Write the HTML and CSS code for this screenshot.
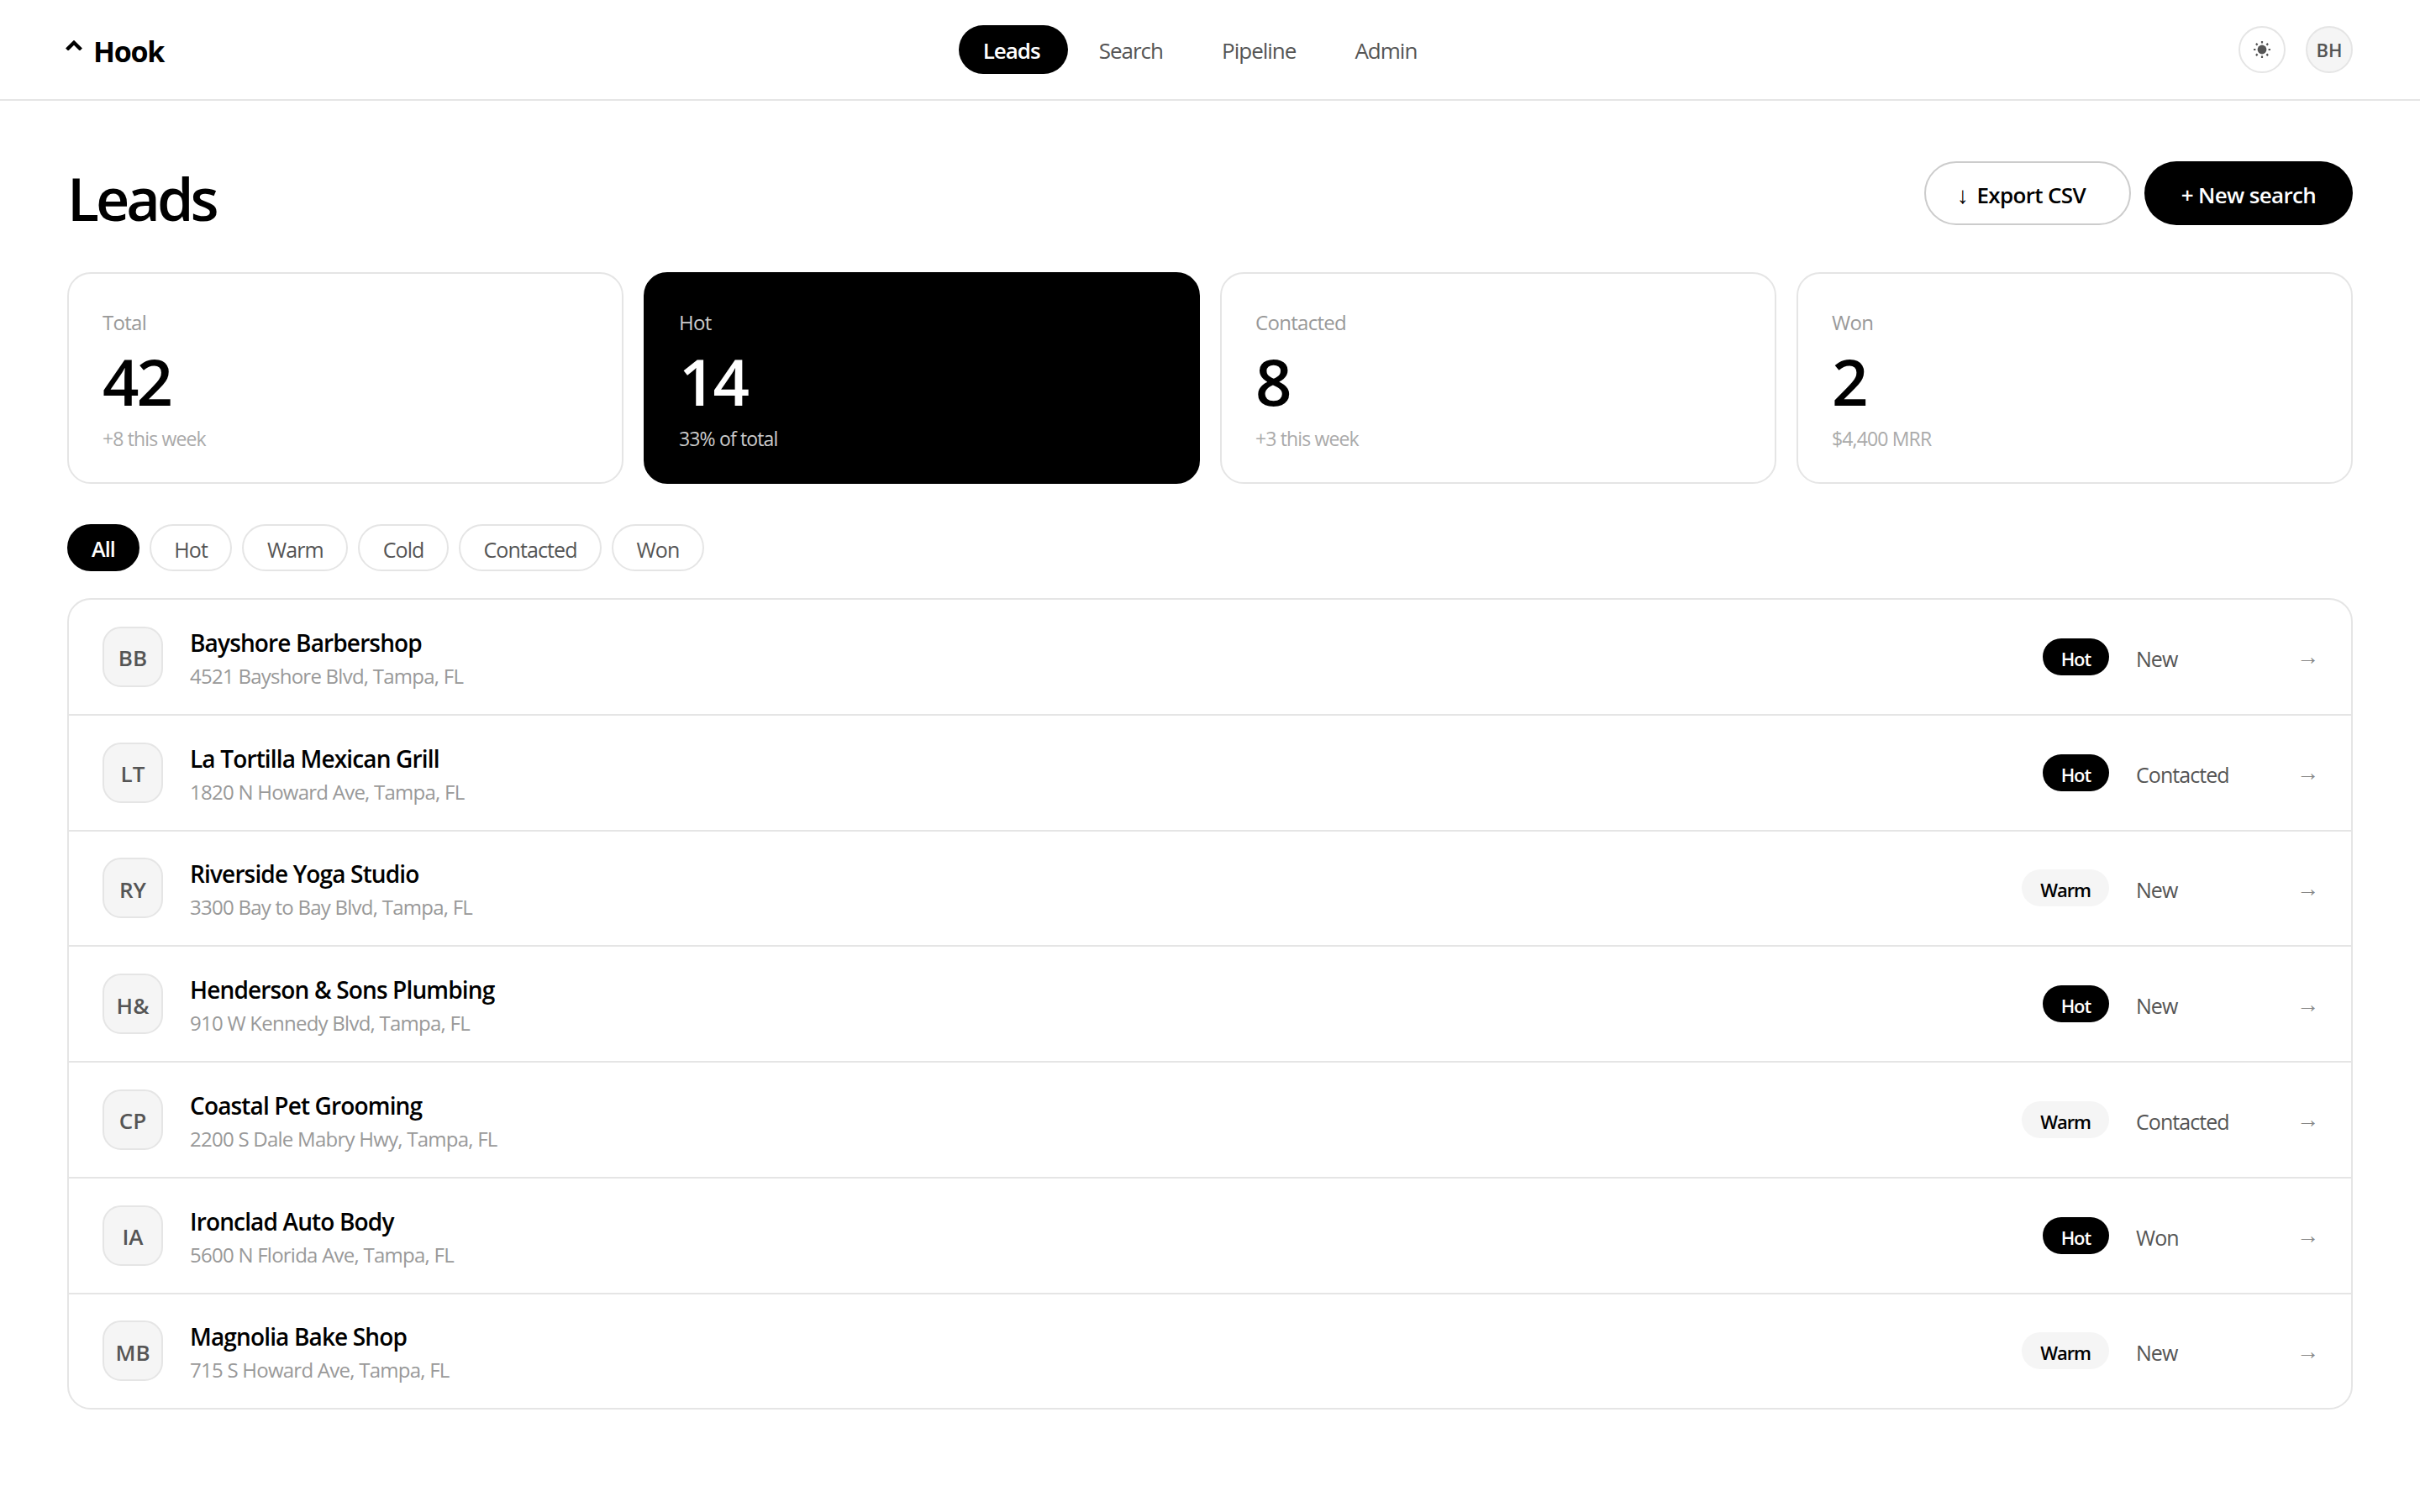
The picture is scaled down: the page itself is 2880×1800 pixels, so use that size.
FILE: index.html
```html
<!DOCTYPE html>
<html>

<head>
    <title>Leads | Hook</title>
    <meta charset="utf-8">
    <link rel="stylesheet" href="styles.css">
</head>

<body>
    <header class="topbar">
        <a class="logo">
            <svg class="caret" viewBox="0 0 20 12" width="20" height="12">
                <path d="M1.6 11 10 2.8 18.4 11" fill="none" stroke="#000" stroke-width="4.4"/>
            </svg>
            <span>Hook</span>
        </a>
        <nav class="nav">
            <a class="nav-item active">Leads</a>
            <a class="nav-item">Search</a>
            <a class="nav-item">Pipeline</a>
            <a class="nav-item">Admin</a>
        </nav>
        <div class="top-actions">
            <button class="round-btn" type="button">
                <svg class="sun" viewBox="0 0 24 24" width="24" height="24">
                    <circle cx="12" cy="12" r="5.4" fill="#555"/>
                    <path d="M12 2v2.4M12 19.6V22M2 12h2.4M19.6 12H22M4.9 4.9l1.7 1.7M17.4 17.4l1.7 1.7M4.9 19.1l1.7-1.7M17.4 6.6l1.7-1.7" stroke="#555" stroke-width="2.2" fill="none"/>
                </svg>
            </button>
            <div class="round-btn user">BH</div>
        </div>
    </header>

    <main class="page">
        <div class="title-row">
            <h1>Leads</h1>
            <div class="title-actions">
                <button class="btn btn-outline" type="button"><span class="arrow-glyph">↓</span> Export CSV</button>
                <button class="btn btn-dark" type="button">+ New search</button>
            </div>
        </div>

        <section class="stats">
            <div class="stat">
                <div class="stat-label">Total</div>
                <div class="stat-num">42</div>
                <div class="stat-sub">+8 this week</div>
            </div>
            <div class="stat stat-dark">
                <div class="stat-label">Hot</div>
                <div class="stat-num">14</div>
                <div class="stat-sub">33% of total</div>
            </div>
            <div class="stat">
                <div class="stat-label">Contacted</div>
                <div class="stat-num">8</div>
                <div class="stat-sub">+3 this week</div>
            </div>
            <div class="stat">
                <div class="stat-label">Won</div>
                <div class="stat-num">2</div>
                <div class="stat-sub">$4,400 MRR</div>
            </div>
        </section>

        <div class="filters">
            <button class="chip active" type="button">All</button>
            <button class="chip" type="button">Hot</button>
            <button class="chip" type="button">Warm</button>
            <button class="chip" type="button">Cold</button>
            <button class="chip" type="button">Contacted</button>
            <button class="chip" type="button">Won</button>
        </div>

        <section class="leads">
            <div class="lead">
                <div class="avatar">BB</div>
                <div class="info">
                    <div class="name">Bayshore Barbershop</div>
                    <div class="addr">4521 Bayshore Blvd, Tampa, FL</div>
                </div>
                <span class="badge hot">Hot</span>
                <span class="status">New</span>
                <span class="go">→</span>
            </div>
            <div class="lead">
                <div class="avatar">LT</div>
                <div class="info">
                    <div class="name">La Tortilla Mexican Grill</div>
                    <div class="addr">1820 N Howard Ave, Tampa, FL</div>
                </div>
                <span class="badge hot">Hot</span>
                <span class="status">Contacted</span>
                <span class="go">→</span>
            </div>
            <div class="lead">
                <div class="avatar">RY</div>
                <div class="info">
                    <div class="name">Riverside Yoga Studio</div>
                    <div class="addr">3300 Bay to Bay Blvd, Tampa, FL</div>
                </div>
                <span class="badge warm">Warm</span>
                <span class="status">New</span>
                <span class="go">→</span>
            </div>
            <div class="lead">
                <div class="avatar">H&amp;</div>
                <div class="info">
                    <div class="name">Henderson &amp; Sons Plumbing</div>
                    <div class="addr">910 W Kennedy Blvd, Tampa, FL</div>
                </div>
                <span class="badge hot">Hot</span>
                <span class="status">New</span>
                <span class="go">→</span>
            </div>
            <div class="lead">
                <div class="avatar">CP</div>
                <div class="info">
                    <div class="name">Coastal Pet Grooming</div>
                    <div class="addr">2200 S Dale Mabry Hwy, Tampa, FL</div>
                </div>
                <span class="badge warm">Warm</span>
                <span class="status">Contacted</span>
                <span class="go">→</span>
            </div>
            <div class="lead">
                <div class="avatar">IA</div>
                <div class="info">
                    <div class="name">Ironclad Auto Body</div>
                    <div class="addr">5600 N Florida Ave, Tampa, FL</div>
                </div>
                <span class="badge hot">Hot</span>
                <span class="status">Won</span>
                <span class="go">→</span>
            </div>
            <div class="lead">
                <div class="avatar">MB</div>
                <div class="info">
                    <div class="name">Magnolia Bake Shop</div>
                    <div class="addr">715 S Howard Ave, Tampa, FL</div>
                </div>
                <span class="badge warm">Warm</span>
                <span class="status">New</span>
                <span class="go">→</span>
            </div>
        </section>
    </main>
</body>

</html>
```

FILE: styles.css
```css
* {
    box-sizing: border-box;
}

html,
body {
    margin: 0;
    background-color: #fff;
    color: #000;
    font-family: "Open Sans", "Noto Sans", sans-serif;
}

button {
    font-family: inherit;
    cursor: pointer;
}

.topbar {
    height: 120px;
    padding: 0 80px;
    display: flex;
    align-items: center;
    justify-content: space-between;
    border-bottom: 2px solid #e5e5e5;
}

.logo {
    padding-top: 3px;
    display: flex;
    align-items: center;
    gap: 13px;
    margin-left: -2px;
    font-size: 34px;
    font-weight: 700;
    letter-spacing: -1.3px;
}

.caret {
    margin-bottom: 14px;
}

.nav {
    display: flex;
    gap: 6px;
}

.nav-item {
    height: 58px;
    padding: 0 32px;
    border-radius: 29px;
    line-height: 61px;
    font-size: 26px;
    letter-spacing: -1px;
    color: #555;
}

.nav-item.active {
    margin-right: -1px;
    padding: 0 33px 0 29px;
    background-color: #000;
    color: #fff;
    font-weight: 600;
}

.top-actions {
    display: flex;
    gap: 24px;
}

.round-btn {
    width: 56px;
    height: 56px;
    padding: 0;
    display: flex;
    align-items: center;
    justify-content: center;
    border: 2px solid #e5e5e5;
    border-radius: 50%;
    background-color: #fff;
}

.round-btn.user {
    background-color: #f5f5f5;
    font-size: 22px;
    font-weight: 600;
    color: #555;
}

.page {
    padding: 72px 80px 0;
}

.title-row {
    display: flex;
    align-items: center;
    justify-content: space-between;
    height: 76px;
    margin-bottom: 56px;
}

h1 {
    margin: 0;
    padding-top: 12px;
    font-size: 70px;
    font-weight: 600;
    letter-spacing: -4px;
    line-height: 76px;
}

.title-actions {
    display: flex;
    gap: 16px;
}

.btn {
    height: 76px;
    padding: 3px 0 0;
    border-radius: 38px;
    font-size: 26px;
    font-weight: 600;
    letter-spacing: -0.65px;
}

.btn-outline {
    width: 246px;
    padding-right: 15px;
    border: 2px solid #ccc;
    background-color: #fff;
    color: #000;
}

.btn-dark {
    width: 248px;
    border: none;
    background-color: #000;
    color: #fff;
}

.arrow-glyph {
    margin-right: 4px;
    font-family: "Liberation Sans", sans-serif;
    font-size: 28px;
    font-weight: 400;
}

.stats {
    display: grid;
    grid-template-columns: repeat(4, 1fr);
    gap: 24px;
    margin-bottom: 48px;
}

.stat {
    height: 252px;
    padding: 40px 40px 0;
    border: 2px solid #e5e5e5;
    border-radius: 28px;
}

.stat-dark {
    background-color: #000;
    border-color: #000;
    color: #fff;
}

.stat-label {
    font-size: 24px;
    line-height: 36px;
    letter-spacing: -0.7px;
    color: #999;
}

.stat-num {
    margin-top: 6px;
    font-size: 76px;
    font-weight: 600;
    line-height: 92px;
    letter-spacing: -3px;
}

.stat-sub {
    margin-top: 4px;
    font-size: 23px;
    line-height: 36px;
    letter-spacing: -0.85px;
    color: #aaa;
}

.stat-dark .stat-label,
.stat-dark .stat-sub {
    color: #ccc;
}

.filters {
    display: flex;
    gap: 12px;
    margin-bottom: 32px;
}

.chip {
    height: 56px;
    padding: 3px 27.5px 0;
    border: 2px solid #e5e5e5;
    border-radius: 28px;
    background-color: #fff;
    font-size: 25px;
    letter-spacing: -0.9px;
    color: #555;
}

.chip.active {
    padding: 1px 27px 0;
    background-color: #000;
    border-color: #000;
    color: #fff;
    font-weight: 600;
}

.leads {
    border: 2px solid #e5e5e5;
    border-radius: 28px;
}

.lead {
    padding: 31.875px 40px;
    display: flex;
    align-items: center;
    border-bottom: 2px solid #e5e5e5;
}

.lead:last-child {
    border-bottom: none;
}

.avatar {
    width: 72px;
    height: 72px;
    margin-right: 32px;
    padding-top: 3px;
    display: flex;
    align-items: center;
    justify-content: center;
    flex-shrink: 0;
    border: 2px solid #e5e5e5;
    border-radius: 22px;
    background-color: #f5f5f5;
    font-size: 26px;
    font-weight: 600;
    color: #555;
}

.info {
    flex: 1;
}

.name {
    font-size: 28px;
    font-weight: 550;
    line-height: 38px;
    letter-spacing: -0.85px;
}

.addr {
    margin-top: 8px;
    font-size: 24px;
    line-height: 26px;
    letter-spacing: -0.75px;
    color: #999;
}

.badge {
    height: 44px;
    padding: 0 22px;
    border-radius: 22px;
    font-size: 22px;
    font-weight: 600;
    line-height: 48px;
    letter-spacing: -1.1px;
}

.badge.hot {
    background-color: #000;
    color: #fff;
}

.badge.warm {
    background-color: #f5f5f5;
    color: #000;
}

.status {
    width: 189px;
    margin-left: 32px;
    padding-top: 4px;
    font-size: 25px;
    letter-spacing: -0.95px;
    color: #555;
}

.go {
    width: 29px;
    margin-right: -2px;
    padding-top: 2px;
    text-align: right;
    font-family: "Liberation Sans", sans-serif;
    font-size: 27px;
    color: #888;
}
```
